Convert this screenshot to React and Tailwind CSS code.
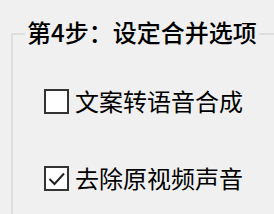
import React from "react";

const CheckRow = ({ label, checked }) => (
  <div className="flex items-center gap-[6px] h-[26px]">
    <div className="shrink-0 w-[25px] h-[25px] border-2 border-[#333] bg-white flex items-center justify-center">
      {checked && (
        <svg width="21" height="21" viewBox="0 0 21 21">
          <path d="M3.5 11 L8.5 16 L18 5.5" fill="none" stroke="#222" strokeWidth="2" />
        </svg>
      )}
    </div>
    <span className="text-[24px] leading-[26px] text-black">{label}</span>
  </div>
);

export default function App() {
  return (
    <div
      className="w-[274px] h-[214px] bg-[#f0f0f0] overflow-hidden relative"
      style={{ fontFamily: '"Noto Sans CJK SC", "Noto Sans", sans-serif' }}
    >
      <div className="mt-[33px] ml-[11px] h-[200px] border-l-2 border-t-2 border-[#dedede] pt-[53px] pl-[31px] flex flex-col gap-[51px]">
        <CheckRow label="文案转语音合成" />
        <CheckRow label="去除原视频声音" checked />
      </div>
      <div className="absolute left-[25px] top-[17px] px-[2px] bg-[#f0f0f0] text-[24px] leading-[30px] text-black font-medium">
        第4步：设定合并选项
      </div>
    </div>
  );
}
